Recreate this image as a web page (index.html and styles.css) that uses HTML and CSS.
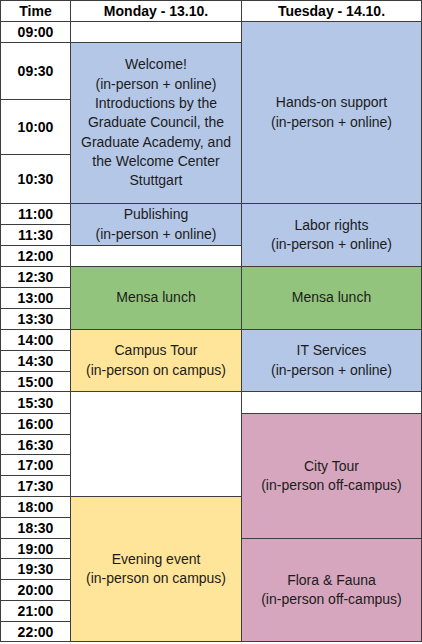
FILE: index.html
```html
<!DOCTYPE html>
<html>
<head>
<meta charset="utf-8">
<link rel="stylesheet" href="styles.css">
</head>
<body>
<div class="schedule">
  <div class="cell head">Time</div>
  <div class="cell time">09:00</div>
  <div class="cell time">09:30</div>
  <div class="cell time">10:00</div>
  <div class="cell time">10:30</div>
  <div class="cell time">11:00</div>
  <div class="cell time">11:30</div>
  <div class="cell time">12:00</div>
  <div class="cell time">12:30</div>
  <div class="cell time">13:00</div>
  <div class="cell time">13:30</div>
  <div class="cell time">14:00</div>
  <div class="cell time">14:30</div>
  <div class="cell time">15:00</div>
  <div class="cell time">15:30</div>
  <div class="cell time">16:00</div>
  <div class="cell time">16:30</div>
  <div class="cell time">17:00</div>
  <div class="cell time">17:30</div>
  <div class="cell time">18:00</div>
  <div class="cell time">18:30</div>
  <div class="cell time">19:00</div>
  <div class="cell time">19:30</div>
  <div class="cell time">20:00</div>
  <div class="cell time">21:00</div>
  <div class="cell time">22:00</div>

  <div class="cell head mon-head">Monday - 13.10.</div>
  <div class="cell head tue-head">Tuesday - 14.10.</div>

  <div class="cell empty mon-0900"></div>
  <div class="cell event blue mon-welcome">Welcome!<br>(in-person + online)<br>Introductions by the<br>Graduate Council, the<br>Graduate Academy, and<br>the Welcome Center<br>Stuttgart</div>
  <div class="cell event blue mon-publishing">Publishing<br>(in-person + online)</div>
  <div class="cell empty mon-1200"></div>
  <div class="cell event green mon-mensa">Mensa lunch</div>
  <div class="cell event yellow mon-campus">Campus Tour<br>(in-person on campus)</div>
  <div class="cell empty mon-free"></div>
  <div class="cell event yellow mon-evening">Evening event<br>(in-person on campus)</div>

  <div class="cell event blue tue-handson">Hands-on support<br>(in-person + online)</div>
  <div class="cell event blue tue-labor">Labor rights<br>(in-person + online)</div>
  <div class="cell event green tue-mensa">Mensa lunch</div>
  <div class="cell event blue tue-it">IT Services<br>(in-person + online)</div>
  <div class="cell empty tue-1530"></div>
  <div class="cell event pink tue-city">City Tour<br>(in-person off-campus)</div>
  <div class="cell event pink tue-flora">Flora &amp; Fauna<br>(in-person off-campus)</div>
</div>
</body>
</html>
```

FILE: styles.css
```css
html, body {
  margin: 0;
  padding: 0;
  background: #ffffff;
}

body {
  font-family: "Liberation Sans", Arial, sans-serif;
  color: #1c1c1c;
}

.schedule {
  display: grid;
  width: 420px;
  padding: 1px;
  gap: 1px;
  background: #3d3d3d;
  grid-template-columns: 69px 170px 179px;
  grid-template-rows:
    20px 20px 56px 54px 48px
    20px 20px 20px 20px 20px
    20px 20px 20px 19px 21px
    20px 19px 20px 20px 20px
    20px 19px 20px 20px 20px 19px;
}

.cell {
  background: #ffffff;
  display: flex;
  align-items: center;
  justify-content: center;
  text-align: center;
}

.head,
.time {
  grid-column: 1;
  font-weight: bold;
  font-size: 14px;
  color: #000000;
}

.event {
  font-size: 14px;
  line-height: 19.3px;
}

.blue { background: #b4c7e7; }
.green { background: #93c47d; }
.yellow { background: #ffe599; }
.pink { background: #d5a6bd; }

.mon-head { grid-column: 2; grid-row: 1; }
.tue-head { grid-column: 3; grid-row: 1; }

.mon-0900 { grid-column: 2; grid-row: 2; }
.mon-welcome { grid-column: 2; grid-row: 3 / 6; }
.mon-publishing { grid-column: 2; grid-row: 6 / 8; }
.mon-1200 { grid-column: 2; grid-row: 8; }
.mon-mensa { grid-column: 2; grid-row: 9 / 12; }
.mon-campus { grid-column: 2; grid-row: 12 / 15; }
.mon-free { grid-column: 2; grid-row: 15 / 20; }
.mon-evening { grid-column: 2; grid-row: 20 / 27; }

.tue-handson { grid-column: 3; grid-row: 2 / 6; }
.tue-labor { grid-column: 3; grid-row: 6 / 9; }
.tue-mensa { grid-column: 3; grid-row: 9 / 12; }
.tue-it { grid-column: 3; grid-row: 12 / 15; }
.tue-1530 { grid-column: 3; grid-row: 15; }
.tue-city { grid-column: 3; grid-row: 16 / 22; }
.tue-flora { grid-column: 3; grid-row: 22 / 27; }
```
